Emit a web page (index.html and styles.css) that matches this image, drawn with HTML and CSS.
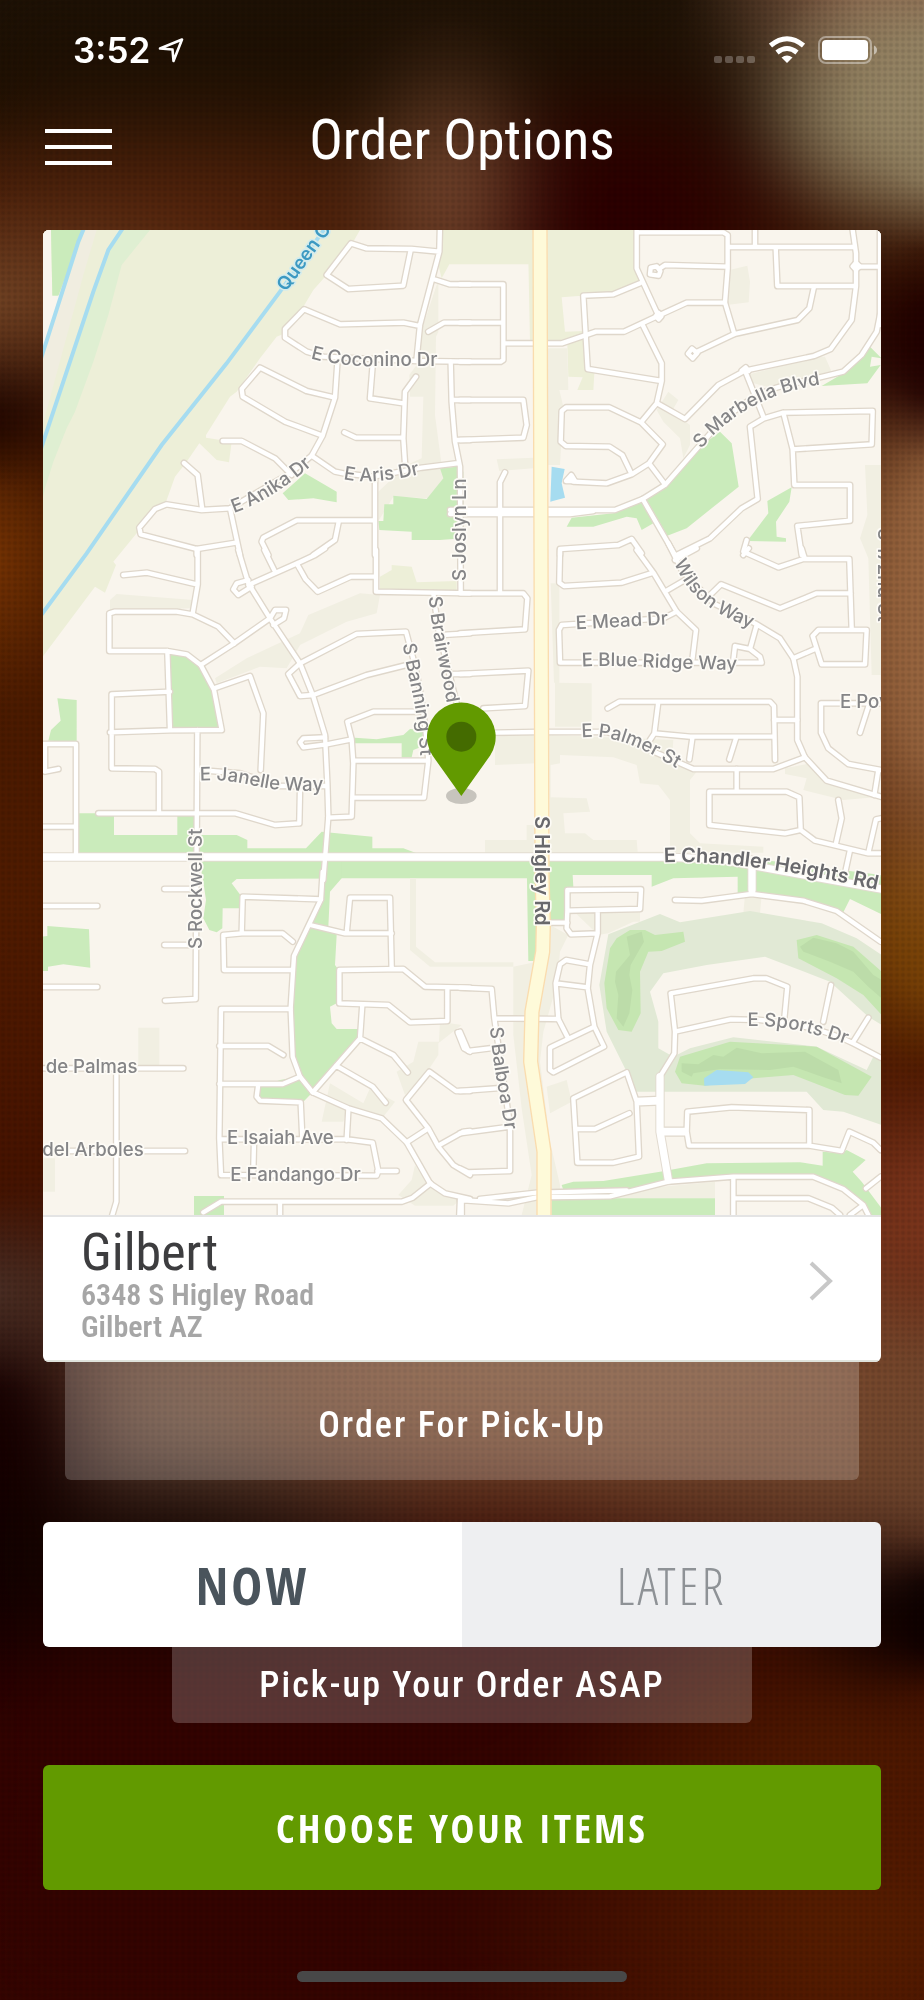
FILE: index.html
```html
<!DOCTYPE html>
<html lang="en">
<head>
<meta charset="utf-8">
<meta name="viewport" content="width=device-width, initial-scale=1">
<title>Order Options</title>
<link rel="stylesheet" href="styles.css">
</head>
<body>
<div class="screen">
  <div class="status">
    <div class="status-left">
      <span class="time">3:52</span>
      <svg class="arrow" viewBox="0 0 26 26" width="26" height="26" aria-hidden="true"><path d="M2 11.500L24 2.500L15.500 24L14.500 12.500Z" fill="none" stroke="#fff" stroke-width="2.600" stroke-linejoin="round"/></svg>
    </div>
    <div class="status-right">
      <svg viewBox="0 0 42 28" width="42" height="28" aria-hidden="true"><g fill="#fff" opacity=".25"><rect x="0" y="20" width="8" height="7" rx="2"/><rect x="11" y="20" width="8" height="7" rx="2"/><rect x="22" y="20" width="8" height="7" rx="2"/><rect x="33" y="20" width="8" height="7" rx="2"/></g></svg>
      <svg viewBox="0 0 36 28" width="36" height="28" aria-hidden="true"><g fill="none" stroke="#fff" stroke-width="5"><path d="M1.500 9.500Q18 -4 34.500 9.500"/><path d="M8 16.500Q18 8.500 28 16.500"/></g><path d="M12.500 21.500Q18 17.500 23.500 21.500L18 27Z" fill="#fff"/></svg>
      <svg viewBox="0 0 60 28" width="60" height="28" aria-hidden="true"><rect x="1" y="1" width="52" height="26" rx="7" fill="none" stroke="#fff" stroke-opacity=".4" stroke-width="2"/><rect x="4" y="4" width="46" height="20" rx="4" fill="#fff"/><path d="M56 9.500Q59 11 59 14T56 18.500Z" fill="#fff" opacity=".5"/></svg>
    </div>
  </div>

  <header class="bar">
    <button class="menu" type="button" aria-label="Menu"><span></span><span></span><span></span></button>
    <h1>Order Options</h1>
  </header>

  <main>
    <section class="card">
      <svg class="map" viewBox="0 0 2514 2955" role="img" aria-label="Map of Gilbert">
        <defs>
          <g id="roads">
            <g transform="translate(-9 -15)">
              <path d="M1200 0L1198 80L1140 300L1130 400M1198 80L1115 72L980 70L933 55L860 150L925 192L1090 182L1112 75M1180 162L1230 178H1290M1140 303L1090 293L900 298L792 253L735 312V338L800 380L850 395L1130 408L1290 410M1165 320L1212 293H1290"/>
              <path d="M893 400L885 518L800 498L660 428L605 492L608 515L735 590L848 632L815 692L750 745L570 850L485 855L380 838L345 852L298 908L302 928L470 972L588 953M885 518L848 632M548 648H605L705 700L755 750M432 714L473 750L487 855"/>
              <path d="M815 692L885 740L910 745L1000 755L1145 728L1258 714M998 420L990 520L1090 535M1128 455L1095 500L1090 640L1095 715M913 622L948 638H1090M1232 410L1235 530L1245 650L1260 725L1262 1100M1235 525H1290M1245 645H1290M1005 755V990M570 850L600 990M470 972V990M1005 886H770L670 938L665 950L685 990M897 886L885 945L820 990"/>
            </g>
            <g transform="translate(1251 -15)">
              <path d="M0 178H130V405L122 410H0M0 293H130M130 355H305L408 320H492L595 272L680 233H795M0 525H190L200 600L190 638L0 645M135 742L120 772V1100M-30 855H465L548 822L615 780L720 660Q850 510 960 485T1150 440L1205 390L1250 320L1262 260M-30 867H330L400 858"/>
              <path d="M530 0V130L595 272M530 22H790L803 30V130L795 233L823 327M803 125L615 120L597 132M803 66H1185M885 15V66M947 66L952 183H1188M1178 15L1188 85V183L1175 285L1112 372L1062 393L855 437L775 480L675 582L592 535M1200 125H1262"/>
              <path d="M540 175L460 208L370 212L383 432L605 468V415L548 300M605 468L590 535L543 592L448 547H318L305 558L302 650L318 663L448 665L487 690L515 748M543 592L608 658L567 715L515 748L440 775L340 770M567 715L615 778M1062 185L1048 250L1013 285L823 327L707 382"/>
              <path d="M855 437L912 580L970 563L1238 558L1235 658L998 673M912 580L870 605L893 822L845 850L750 940L650 990M970 563L998 673L1003 780H1170V887L1012 903L1025 990M548 822L645 990M300 990V972L475 960L515 942L545 985M866 970L850 990M1260 15V300"/>
              <path d="M572 128L590 124L601 138L596 152L570 148ZM684 386L696 371L712 384L698 400ZM318 768L334 750L345 768ZM1188 113L1199 124L1188 134L1178 124ZM595 263L604 274L596 283L587 274ZM845 437L857 427L866 438"/>
            </g>
            <g transform="translate(-9 960)">
              <path d="M250 75L320 68L470 103M473 0V103L458 190M208 303V190L225 185H410L458 193L535 230L583 280M208 303H380L440 313L482 345L522 420L545 540L390 541L210 547M382 303L390 540M390 425L215 433V655L345 657L357 665V788M472 540L467 1347L375 1352"/>
              <path d="M595 0L625 100L690 205L780 340L820 440L855 555L862 700L865 800L850 990M625 105L760 45L825 15L855 -5M625 90L590 100L580 118L595 135L635 110M673 0L705 65M770 40L797 88L833 125L932 80H1005M1008 0V125L1290 130M690 205L583 280L482 345M690 205L705 180H738L732 205L700 225"/>
              <path d="M780 340L950 252L1098 245L1110 290Q1150 430 1165 632L1152 743H940M780 340L745 372L780 438L820 435L980 375L1100 345M522 415L630 378L670 490L662 660M855 562L790 565L780 577L790 592L860 583L935 568M1140 485H1000L922 515L935 568L940 640L935 800L865 803M940 632H1160"/>
              <path d="M780 720L778 820L705 825L587 790H175M475 660L600 670L720 708H860M8 582H108V910M15 582V665L55 657M8 830H108M1180 130L1195 240L1230 380L1250 460M1205 255L1290 250M1240 372H1290"/>
            </g>
            <g transform="translate(1251 960)">
              <path d="M0 130H190L202 145L195 238L0 250M0 372L205 362L195 468L70 475M108 548L228 546M265 546H440Q520 570 570 600L700 657H940L1035 622M300 0L298 98L312 108L485 98L580 68M530 0L580 68L650 185L708 240L697 330M620 122L675 90"/>
              <path d="M625 -20L665 60L760 160L885 220L960 265L1000 325L1012 380V570L1035 622L1100 692L1262 740M645 30L710 -5M745 140L783 103L960 175L1070 130H1172M860 -30L850 5L955 52L1030 27H1168L1175 235M1035 27L1025 -5M650 185L610 205L305 225L297 240L300 338H905L900 320L870 297L825 288L820 330M890 225L870 297"/>
              <path d="M1000 325L1065 297M1058 258L1075 240H1220L1215 343H1085L1058 258M443 475L478 455H930L942 468L945 630M595 455L583 550L690 560H942M583 550L570 570M697 565L688 628M828 565L808 628M942 510H1012M830 657V722M748 725H980L1018 742L1022 840L975 850L748 825ZM1022 840L1065 872L1225 910H1262"/>
              <path d="M1135 750L1145 805L1128 880M1225 908L1248 808L1262 805M1170 900L1155 970M1262 660L1165 642L1105 595L1083 548V460H1262M1225 470L1200 548M1255 660L1243 735"/>
            </g>
            <g transform="translate(-9 1935)">
              <path d="M8 93H172M8 336H172M373 42H467M373 210H467M8 580H430M8 828H435M229 580V980L217 1020M848 -10L843 73L762 243L752 400L758 545L780 605L818 652L925 700L1025 730L1100 802L1170 925L1215 955L1290 972"/>
              <path d="M843 73L608 65L605 175M758 200L728 175H605L550 180L552 285H758M810 150L915 175H1055M920 175L930 68H1050L1055 280M898 385V285L1090 282L1155 335L1290 338M898 385L1045 390L1110 442L1222 438V338M967 388L960 490L818 652M960 490L1060 540L1103 592M888 572L998 635L1037 683"/>
              <path d="M752 402H543L538 790L543 900L1010 902L1015 888L998 803L920 793H540M538 513H685L730 540M538 627H728L780 605M655 627L650 665L660 677L782 682L787 790M925 705L920 795M642 800L640 885M1012 888H1070M490 1012L543 980H1085L1118 968L1172 925M720 980V1020M1260 975L1258 1020"/>
              <path d="M1290 648H1248L1168 590L1098 675L1165 760L1195 815L1240 870L1290 900M1100 802L1165 760M1195 812L1270 770L1290 768M1253 472L1272 520L1290 530"/>
            </g>
            <g transform="translate(1251 1935)">
              <path d="M0 338L95 342L103 430L295 432M0 470L25 528L90 520M0 648L110 640M0 775L150 755V888L25 892L0 880M103 430L150 750M0 975L145 985L230 967L450 964L625 920M60 972L230 953L500 946M5 975V1020M625 920L820 905H1060L1150 942L1210 990L1225 1020M820 905V1020M820 970H1045L1115 998L1140 1020M1210 990L1170 1020"/>
              <path d="M270 143H322M322 105V45L543 43L540 102L322 107L320 160L333 178L412 175M413 107V175L390 270L383 340L403 455L432 515L280 592L270 585V518L403 455M390 268L318 255L300 268L287 325L295 432L322 485M287 325L383 337M340 670L500 592L530 680L537 845L460 863H352ZM348 762H405L508 715M530 675L600 672M530 685L600 682"/>
              <path d="M645 75L725 77L875 57L1030 77L1130 108L1262 200M645 470L632 355L880 310H918L982 335L973 430M645 470L812 433L900 435Q1070 450 1180 505L1262 548M645 470L643 535L600 605V770M600 765H680M600 775H680M680 770L682 710L815 697L1048 705V812H687ZM1048 812L1145 828L1168 770L1240 803L1262 825M1113 330L1090 440M1225 428L1180 500M1262 905L1218 940"/>
            </g>
          </g>
          <g id="avenues">
            <path d="M-20 1881H1860L2030 1888L2200 1920L2530 1980M2127 1890V1980M1851 2540V2705L1876 2850"/>
          </g>
          <path id="highway" d="M1491 -20L1497 1935L1501 2085L1499 2165L1467 2345L1463 2495L1503 2765V2970"/>
          <path id="l-queen" d="M738 202L900 -22"/>
          <path id="l-coconino" d="M812 400Q900 424 1000 424H1260"/>
          <path id="l-anika" d="M582 864Q710 820 850 690"/>
          <path id="l-aris" d="M910 762Q1010 785 1200 732"/>
          <path id="l-joslyn" d="M1278 1068V700"/>
          <path id="l-marbella" d="M724 672Q870 490 1160 470"/>
          <path id="l-brair" d="M1166 140C1176 260 1204 360 1232 520"/>
          <path id="l-banning" d="M1088 282C1105 400 1142 480 1142 680"/>
          <path id="l-janelle" d="M480 692C620 685 640 722 780 722H920"/>
          <path id="l-rockwell" d="M485 1197V780"/>
          <path id="l-mead" d="M348 238L680 220"/>
          <path id="l-ridge" d="M366 350C500 342 620 360 900 360"/>
          <path id="l-wilson" d="M642 38C690 150 760 195 930 255"/>
          <path id="l-palmer" d="M365 562C470 550 560 600 710 690"/>
          <path id="l-chandler" d="M612 937Q860 925 1340 1040"/>
          <path id="l-higley" d="M226 798V1260"/>
          <path id="l-172" d="M1255 -65V300"/>
          <path id="l-balboa" d="M90 457C100 600 130 690 145 850"/>
          <path id="l-sports" d="M863 453C960 450 1070 470 1230 535"/>
        </defs>

        <rect width="2514" height="2955" fill="#f9f5ed"/>

        <g transform="translate(-9 -15)">
          <path fill="#edefd8" d="M8 15H960L920 85L860 150L820 195L790 245L735 325L710 335L660 400L590 500L570 515L498 630V638L575 650L567 712L530 705L478 655L440 710L405 755L380 825L290 925L220 1010L228 1020L195 1103L165 1085L8 1295Z"/>
          <path fill="#f9f5ed" d="M8 15H33L37 210H60L8 380Z"/>
          <path fill="#caebbb" d="M33 15H130L55 212H37Z"/>
          <path fill="#f0ede0" d="M135 15H170L130 150L8 600V390Z"/>
          <path fill="#dfefd2" d="M245 15H330L245 120L205 270L160 410L105 560L80 610L40 710L15 790L8 820V655L160 200L205 75Z"/>
          <path fill="#edefd8" d="M1205 15H1480V118H1228L1205 160L1190 100Z"/>
          <path fill="#f1efe2" d="M1195 165V320L1188 335L1185 570L1210 760L1165 820L1060 815L1015 888V800L1100 720L1145 700L1150 515H1110L1108 450L1130 420L1150 300Z"/>
          <path fill="#caebbb" d="M1060 812L1160 822L1210 760L1200 730L1250 725L1270 740V940L1200 945H1115V920L1018 915L1015 888H1030L1033 838H1060ZM795 745L890 800V832L820 820L745 825L728 805Z"/>
          <path fill="none" stroke="#a6dcf0" stroke-width="12" d="M136 0L115 50L0 410M255 0L205 75L160 200L0 680M862 0L720 200L560 415L365 660L140 985L0 1175"/>
        </g>
        <g transform="translate(1251 -15)">
          <path fill="#edefd8" d="M205 100H222V350H210ZM262 15H528L545 170L465 205L305 217L315 320L375 318L385 430L403 445L400 495H352L368 457L325 455L322 360L262 350Z"/>
          <path fill="#f1efe2" d="M808 135L862 122L870 170L866 232L800 240ZM860 450L1060 398L1095 395L1115 440L940 490L880 475ZM590 555L625 500L655 525L635 560L690 600L690 660L670 700L660 640L610 590ZM262 370H322L325 495H298L310 545L300 720H262ZM110 703L220 698V730L118 738ZM1215 720H1262V1350H1235L1225 1000L1200 940L1222 870Z"/>
          <path fill="#caebbb" d="M780 620L815 655L836 785L755 850L680 910L622 932L560 825L620 780L720 665ZM335 878L460 865L550 825L580 895L545 915L530 880L500 875L400 905H320ZM1230 365L1265 400L1235 395L1230 425L1262 420L1222 475L1085 483L1150 445L1205 390ZM922 828L995 787L988 830L948 890L950 935L978 940V950L862 948L925 865Z"/>
          <path fill="#a6dcf0" d="M275 725L314 732L305 775L315 818L271 830Z"/>
        </g>
        <g transform="translate(-9 960)">
          <path fill="#f1efe2" d="M210 150L230 132L460 150L450 175L210 185ZM620 325L780 250L805 195L960 130L1020 135L1010 190L920 215L780 285L740 355L660 350L530 400L525 385Z"/>
          <path fill="#edefd8" d="M1020 80L1055 60V45L1115 50L1130 97L1250 93V125L1020 118Z"/>
          <path fill="#caebbb" d="M390 310L440 318L480 345L520 420L545 535H398ZM52 445L110 450V575L25 572L33 540L62 512ZM945 563L1010 568L1090 555L1110 537L1150 540L1145 590L1120 600L1115 622H1085V580H945ZM117 790H222V855H412V798H470V855H590L622 870V895H798L845 845L997 860V895H1090L1130 910H117ZM485 930H1560V985H485Z"/>
        </g>
        <g transform="translate(1251 960)">
          <path fill="#f1efe2" d="M285 398L395 400V530H285ZM267 555L640 570L635 640L710 665L690 690V850L720 880L910 890V908H270ZM105 560L228 550V640L105 645ZM75 870H200V825H228V908H75ZM975 655L1050 640L1100 692L1262 740L1150 750L1030 720L1040 685L975 672ZM272 100H298V398H282Z"/>
          <path fill="#f9f5ed" d="M300 615L460 622L530 645L540 700L595 705L630 750V905H533L530 870H400L375 850H315L310 790L390 785L380 745L272 742V645L300 640Z"/>
        </g>
        <g transform="translate(-9 1935)">
          <path fill="#caebbb" d="M485 -42H850L845 10L590 12L575 25L605 65L600 100H548L547 160L530 172L508 165L490 130L498 75L487 0ZM845 -42H905V10L870 50L865 155L890 180L885 270L900 290L890 385L870 395L875 445L890 462H955V490L815 650L780 600L755 540L752 400L760 245L810 150L843 73ZM660 635L720 615L780 605L815 655L790 680L655 670ZM8 185L22 183V153L147 163L151 278L70 268L24 275V288H8ZM462 963H552V1020H462Z"/>
          <path fill="#f1efe2" d="M295 458H358V570H295ZM10 850H45V950H10ZM1110 10H1128V215L1185 262H1420V275H1170L1110 225ZM845 740L870 625L970 685L990 640L1065 680L1030 725L920 705L910 740ZM1200 440L1265 450L1195 505V540L1155 600L1095 660L1070 590L1120 560L1135 500H1197ZM1125 870L1165 930L1205 950L1260 975L1240 992H1125L1075 960L1115 915Z"/>
        </g>
        <g transform="translate(1251 1935)">
          <path fill="#f1efe2" d="M160 275L230 260L270 150L325 180L300 230L290 330L250 470L240 560L270 800L300 930V1020H185L215 900L185 700L160 480ZM340 108H540V140H520L445 175L415 180ZM855 60H905L900 115H850ZM260 635L320 615L335 680L270 715ZM500 945L765 920V970H440Z"/>
          <path fill="#caebbb" d="M200 -42H240V258H205ZM262 -55L870 -50L1265 0V118L1170 72L1150 112L1020 75L870 55H833V5L640 10L575 35V0H338L340 35L315 95L320 140H262ZM305 930L340 920L430 918L600 890L740 865L1020 862L1088 872V830L1145 835L1160 825L1217 855L1178 890L1205 920L1265 1000V1020H1215L1200 985L1140 935L1060 905L625 918L500 945H310ZM275 970H765V1020H275Z"/>
          <path fill="#e1e9d5" d="M445 178L600 117L660 142L870 108L1085 145L1190 190L1265 240V450L1225 425L1110 320L915 245L740 270L610 295L570 350L595 440V520L640 545L600 600V650H530L500 590L440 470L418 330ZM690 520L820 487L1070 515L1220 585L1240 545L1265 555V750L1150 710L1090 705L1040 650L610 650L600 600L650 540Z"/>
          <path fill="#c5e6b1" d="M470 190L510 165H555L585 180L670 170L675 200L605 228L565 230L540 290L542 415L515 470L475 465L440 400L433 325L450 220ZM1010 195L1070 180L1180 215L1265 290V420L1210 360L1130 310L1015 250ZM660 545L810 500L1070 515L1235 605L1195 662L1155 660L1000 600L880 610L735 632L665 625L645 590Z"/>
          <path fill="#bcdca9" d="M500 185L545 170L552 200L512 270L508 300L517 345L508 415L490 455L470 430L475 360L465 320L468 290L510 240ZM1020 215L1060 188L1130 205L1180 230L1240 300L1265 315V370L1225 335L1180 290L1110 260L1030 230ZM665 565L715 568L760 540L790 545L830 518L905 535L1035 530L1135 585L1145 625L1085 605L1000 575L930 585L780 582L700 595L695 605L665 590Z"/>
          <path fill="#a6dcf0" d="M732 610L770 585L865 592L880 607L855 627L733 632Z"/>
        </g>

        <g fill="none" stroke-linejoin="round" stroke-linecap="round">
          <use href="#roads" stroke="#dfd7cb" stroke-width="21"/>
          <use href="#avenues" stroke="#e2dbd0" stroke-width="28"/>
          <use href="#roads" stroke="#fff" stroke-width="13"/>
          <use href="#avenues" stroke="#fff" stroke-width="22"/>
          <use href="#highway" stroke="#fadcae" stroke-width="46"/>
          <use href="#highway" stroke="#fefad9" stroke-width="38"/>
        </g>

        <g class="labels">
          <g transform="translate(-9 -15)">
            <text class="water"><textPath href="#l-queen">Queen Creek</textPath></text>
            <text><textPath href="#l-coconino">E Coconino Dr</textPath></text>
            <text><textPath href="#l-anika">E Anika Dr</textPath></text>
            <text><textPath href="#l-aris">E Aris Dr</textPath></text>
            <text><textPath href="#l-joslyn">S Joslyn Ln</textPath></text>
          </g>
          <g transform="translate(1251 -15)"><text><textPath href="#l-marbella">S Marbella Blvd</textPath></text></g>
          <g transform="translate(-9 960)">
            <text><textPath href="#l-brair">S Brairwood</textPath></text>
            <text><textPath href="#l-banning">S Banning St</textPath></text>
            <text><textPath href="#l-janelle">E Janelle Way</textPath></text>
            <text><textPath href="#l-rockwell">S Rockwell St</textPath></text>
          </g>
          <g transform="translate(1251 960)">
            <text><textPath href="#l-mead">E Mead Dr</textPath></text>
            <text><textPath href="#l-ridge">E Blue Ridge Way</textPath></text>
            <text><textPath href="#l-wilson">Wilson Way</textPath></text>
            <text><textPath href="#l-palmer">E Palmer St</textPath></text>
            <text x="1140" y="475">E Powell Way</text>
            <text class="major"><textPath href="#l-chandler">E Chandler Heights Rd</textPath></text>
            <text class="major"><textPath href="#l-higley">S Higley Rd</textPath></text>
            <text><textPath href="#l-172">S 172nd St</textPath></text>
          </g>
          <g transform="translate(-9 1935)">
            <text x="17" y="595">de Palmas</text>
            <text x="7" y="843">del Arboles</text>
            <text x="561" y="806">E Isaiah Ave</text>
            <text x="571" y="918">E Fandango Dr</text>
          </g>
          <g transform="translate(1251 1935)">
            <text><textPath href="#l-balboa">S Balboa Dr</textPath></text>
            <text><textPath href="#l-sports">E Sports Dr</textPath></text>
          </g>
        </g>

        <g transform="translate(-9 960)">
          <ellipse cx="1264" cy="738" rx="46" ry="24" fill="#000" opacity=".2"/>
          <path d="M1264 738L1177 616A103 103 0 1 1 1351 616Z" fill="#629a00"/>
          <circle cx="1264" cy="560" r="45" fill="#446b00"/>
        </g>
      </svg>
      <a class="store" href="#store">
        <span class="store-text">
          <span class="store-name">Gilbert</span>
          <span class="store-address">6348 S Higley Road<br>Gilbert AZ</span>
        </span>
        <svg viewBox="0 0 24 40" width="24" height="40" aria-hidden="true"><path d="M2 2L21 20L2 38" fill="none" stroke="#c8c8c8" stroke-width="4"/></svg>
      </a>
    </section>

    <p class="note note-type">Order For Pick-Up</p>

    <fieldset class="toggle">
      <legend>Pick-up time</legend>
      <input type="radio" name="when" id="now" checked>
      <label for="now">NOW</label>
      <input type="radio" name="when" id="later">
      <label for="later">LATER</label>
    </fieldset>

    <p class="note note-time">Pick-up Your Order ASAP</p>

    <button class="choose" type="button">CHOOSE YOUR ITEMS</button>
  </main>

  <div class="home"></div>
</div>
</body>
</html>
```
FILE: styles.css
```css
* {
  box-sizing: border-box;
}

body {
  margin: 0;
  background: #330300;
  color: #fff;
  font-family: "Roboto Condensed", "Open Sans Condensed", "Open Sans", sans-serif;
}

.screen {
  position: relative;
  z-index: 0;
  display: flex;
  flex-direction: column;
  min-height: 100vh;
  padding: 0 43px;
  overflow: hidden;
  background:
    radial-gradient(210px 140px at 940px 110px, #958565 50%, transparent),
    radial-gradient(220px 130px at 900px 0, #8a624a 20%, transparent),
    radial-gradient(110px 170px at 450px 190px, #7a4c33, transparent),
    radial-gradient(220px 160px at 620px 220px, #2c0000 30%, transparent),
    radial-gradient(260px 110px at 0 300px, #734526, transparent),
    radial-gradient(420px 160px at 160px 240px, #5a280f, transparent),
    radial-gradient(100px 110px at 924px 350px, #200000 40%, transparent),
    radial-gradient(100px 90px at 0 400px, #200600 30%, transparent),
    radial-gradient(100px 150px at 0 560px, #7a3604, transparent),
    radial-gradient(120px 330px at 924px 620px, #986640 40%, transparent),
    radial-gradient(120px 140px at 924px 930px, #7a4408 40%, transparent),
    radial-gradient(150px 100px at 0 1290px, #4d3228, transparent),
    radial-gradient(320px 120px at 160px 1560px, #120400 10%, transparent),
    radial-gradient(110px 260px at 0 1480px, #160000 40%, transparent),
    radial-gradient(160px 80px at 924px 1615px, #0c0000 40%, transparent),
    radial-gradient(200px 150px at 924px 1210px, #7a351c 20%, transparent),
    radial-gradient(700px 210px at 600px 1370px, #7a4c30 30%, transparent),
    radial-gradient(300px 200px at 200px 1420px, #54443c 10%, transparent),
    radial-gradient(400px 200px at 924px 1460px, #643f2a 20%, transparent),
    radial-gradient(400px 300px at 850px 1930px, #5a2000, transparent),
    radial-gradient(300px 160px at 850px 1740px, #4a1700, transparent),
    linear-gradient(#1e1206 0, #201002 120px, #3a1604 200px, #501c00 900px, #4a1600 1100px, #2c0200 1600px, #330300 1700px, #350500 100%);
}

.screen::before {
  content: "";
  position: absolute;
  inset: 0;
  z-index: -1;
  background: radial-gradient(rgba(0, 0, 0, .1) 1px, transparent 3px) 0 0 / 6px 6px;
  backdrop-filter: blur(32px);
}

.status {
  display: flex;
  justify-content: space-between;
  align-items: center;
  height: 100px;
  padding: 0 3px 0 30px;
}

.status-left {
  display: flex;
  align-items: center;
  gap: 8px;
}

.time {
  font: 600 35px/40px Inter, sans-serif;
}

.status-right {
  display: flex;
  align-items: center;
  gap: 13px;
}

.bar {
  display: grid;
  grid-template-columns: 68px 1fr 68px;
  align-items: center;
  height: 88px;
  margin-bottom: 42px;
}

.menu {
  display: flex;
  flex-direction: column;
  gap: 12px;
  margin: 6px 0 0 2px;
  padding: 0;
  border: 0;
  background: none;
}

.menu span {
  width: 67px;
  height: 4px;
  background: #fff;
}

h1 {
  margin: 0 0 8px;
  font-size: 56px;
  line-height: 64px;
  font-weight: 400;
  text-align: center;
}

main {
  display: flex;
  flex-direction: column;
  align-items: center;
}

.card {
  align-self: stretch;
  overflow: hidden;
  border-radius: 6px;
  background: #fff;
}

.map {
  display: block;
  width: 100%;
  height: auto;
}

.labels {
  font: 500 56px Inter, sans-serif;
  fill: #858587;
  stroke: #fdfbf6;
  stroke-width: 10px;
  stroke-linejoin: round;
  paint-order: stroke;
}

.labels .major {
  font-weight: 600;
  font-size: 60px;
  fill: #68686c;
}

.labels .water {
  font-weight: 600;
  fill: #3c99c2;
  stroke: #d5ecec;
}

.store {
  display: flex;
  justify-content: space-between;
  align-items: center;
  height: 147px;
  padding: 0 48px 16px 38px;
  border-top: 2px solid #e4e4e4;
  border-bottom: 2px solid #dfe3dc;
  color: #3d3d3f;
  text-decoration: none;
}

.store-text {
  display: flex;
  flex-direction: column;
  padding-top: 8px;
}

.store-name {
  font-size: 52px;
  line-height: 52px;
}

.store-address {
  color: #a6a6a6;
  font-size: 30px;
  line-height: 32px;
  font-weight: 600;
}

.note {
  display: flex;
  justify-content: center;
  align-items: center;
  margin: 0;
  border-radius: 0 0 6px 6px;
  background: rgba(255, 255, 255, .2);
  font-size: 36px;
  line-height: 40px;
  font-weight: 500;
  letter-spacing: 2px;
}

.note-type {
  width: calc(100% - 44px);
  height: 118px;
  margin-bottom: 42px;
  padding-top: 8px;
}

.note-time {
  width: 580px;
  max-width: 100%;
  height: 76px;
  margin-bottom: 42px;
}

.toggle {
  display: flex;
  align-self: stretch;
  height: 125px;
  margin: 0;
  padding: 0;
  overflow: hidden;
  border: 0;
  border-radius: 6px;
}

.toggle legend,
.toggle input {
  position: absolute;
  width: 1px;
  height: 1px;
  margin: 0;
  opacity: 0;
}

.toggle label {
  display: flex;
  flex: 1;
  justify-content: center;
  align-items: center;
  background: #eeeff1;
  color: #8e9296;
  font-family: "Open Sans Condensed Light", "Roboto Condensed", sans-serif;
  font-size: 52px;
  font-weight: 300;
  letter-spacing: 3px;
}

.toggle input:checked + label {
  background: #fff;
  color: #4a545c;
  font-family: "Open Sans Condensed", sans-serif;
  font-weight: 700;
}

.choose {
  align-self: stretch;
  height: 125px;
  border: 0;
  border-radius: 6px;
  background: #629a00;
  color: #fff;
  font-family: "Open Sans Condensed", "Roboto Condensed", sans-serif;
  font-size: 40px;
  font-weight: 700;
  letter-spacing: 3px;
}

.home {
  align-self: center;
  width: 330px;
  max-width: 60%;
  height: 11px;
  margin: auto 0 18px;
  border-radius: 6px;
  background: #484848;
}
```
